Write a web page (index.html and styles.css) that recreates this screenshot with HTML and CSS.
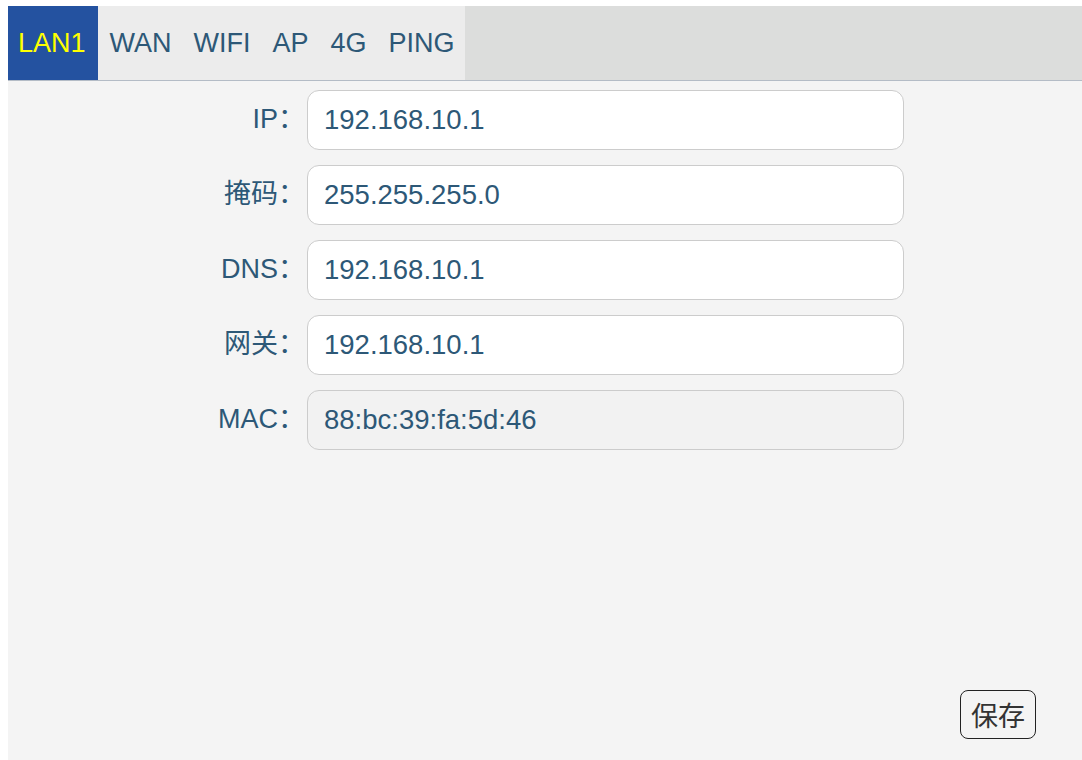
FILE: index.html
```html
<!DOCTYPE html>
<html lang="zh">
<head>
    <meta charset="UTF-8">
    <title>网络设置</title>
    <link rel="stylesheet" href="styles.css">
</head>
<body>
    <div class="panel">
        <div class="tabs">
            <div class="tab-list">
                <div class="tab active">LAN1</div>
                <div class="tab">WAN</div>
                <div class="tab">WIFI</div>
                <div class="tab">AP</div>
                <div class="tab">4G</div>
                <div class="tab">PING</div>
            </div>
        </div>
        <div class="content">
            <div class="form">
                <div class="row">
                    <label class="label">IP：</label>
                    <input class="field" type="text" value="192.168.10.1">
                </div>
                <div class="row">
                    <label class="label">掩码：</label>
                    <input class="field" type="text" value="255.255.255.0">
                </div>
                <div class="row">
                    <label class="label">DNS：</label>
                    <input class="field" type="text" value="192.168.10.1">
                </div>
                <div class="row">
                    <label class="label">网关：</label>
                    <input class="field" type="text" value="192.168.10.1">
                </div>
                <div class="row">
                    <label class="label">MAC：</label>
                    <input class="field readonly" type="text" value="88:bc:39:fa:5d:46" readonly>
                </div>
            </div>
            <div class="actions">
                <button class="btn-save">保存</button>
            </div>
        </div>
    </div>
</body>
</html>
```

FILE: styles.css
```css
:root {
    --text: #2d5877;
    --tab-bg: #ececec;
    --bar-bg: #dcdddc;
    --active: #2452a0;
    --page: #f4f4f4;
}

html {
    overflow: hidden;
}

body {
    margin: 6px 0 0 8px;
    font-family: "Liberation Sans", Arial, "Noto Sans CJK SC", sans-serif;
    background: #fff;
}

.panel {
    width: calc(100vw - 8px);
    height: calc(100vh - 6px);
    display: flex;
    flex-direction: column;
    background: var(--page);
}

.tabs {
    height: 74px;
    background: var(--bar-bg);
    border-bottom: 1px solid #b4bcc6;
    display: flex;
}

.tab-list {
    display: flex;
    background: var(--tab-bg);
    gap: 2px;
}

.tab {
    display: flex;
    align-items: center;
    padding: 0 10px;
    font-size: 27px;
    color: var(--text);
}

.tab.active {
    background: var(--active);
    color: #ffff00;
    padding-right: 12px;
}

.content {
    flex: 1;
    display: flex;
    flex-direction: column;
}

.form {
    flex: 1;
    padding-top: 9px;
}

.row {
    display: flex;
    align-items: center;
    margin-bottom: 15px;
}

.label {
    width: 297px;
    text-align: right;
    font-size: 27px;
    line-height: 1;
    color: var(--text);
    margin-right: 2px;
    padding-bottom: 2px;
}

.field {
    box-sizing: border-box;
    width: 597px;
    height: 60px;
    border: 1px solid #cccccc;
    border-radius: 12px;
    background: #fff;
    padding: 0 16px;
    font-family: inherit;
    font-size: 27.5px;
    color: var(--text);
    outline: none;
}

.field.readonly {
    background: #f2f2f2;
}

.actions {
    display: flex;
    justify-content: flex-end;
    padding: 0 46px 21px 0;
}

.btn-save {
    height: 49px;
    padding: 0 10px;
    border: 1px solid #222;
    border-radius: 8px;
    background: transparent;
    font-family: "Noto Sans CJK SC", sans-serif;
    font-size: 27px;
    line-height: 1;
    color: #333;
}
```
